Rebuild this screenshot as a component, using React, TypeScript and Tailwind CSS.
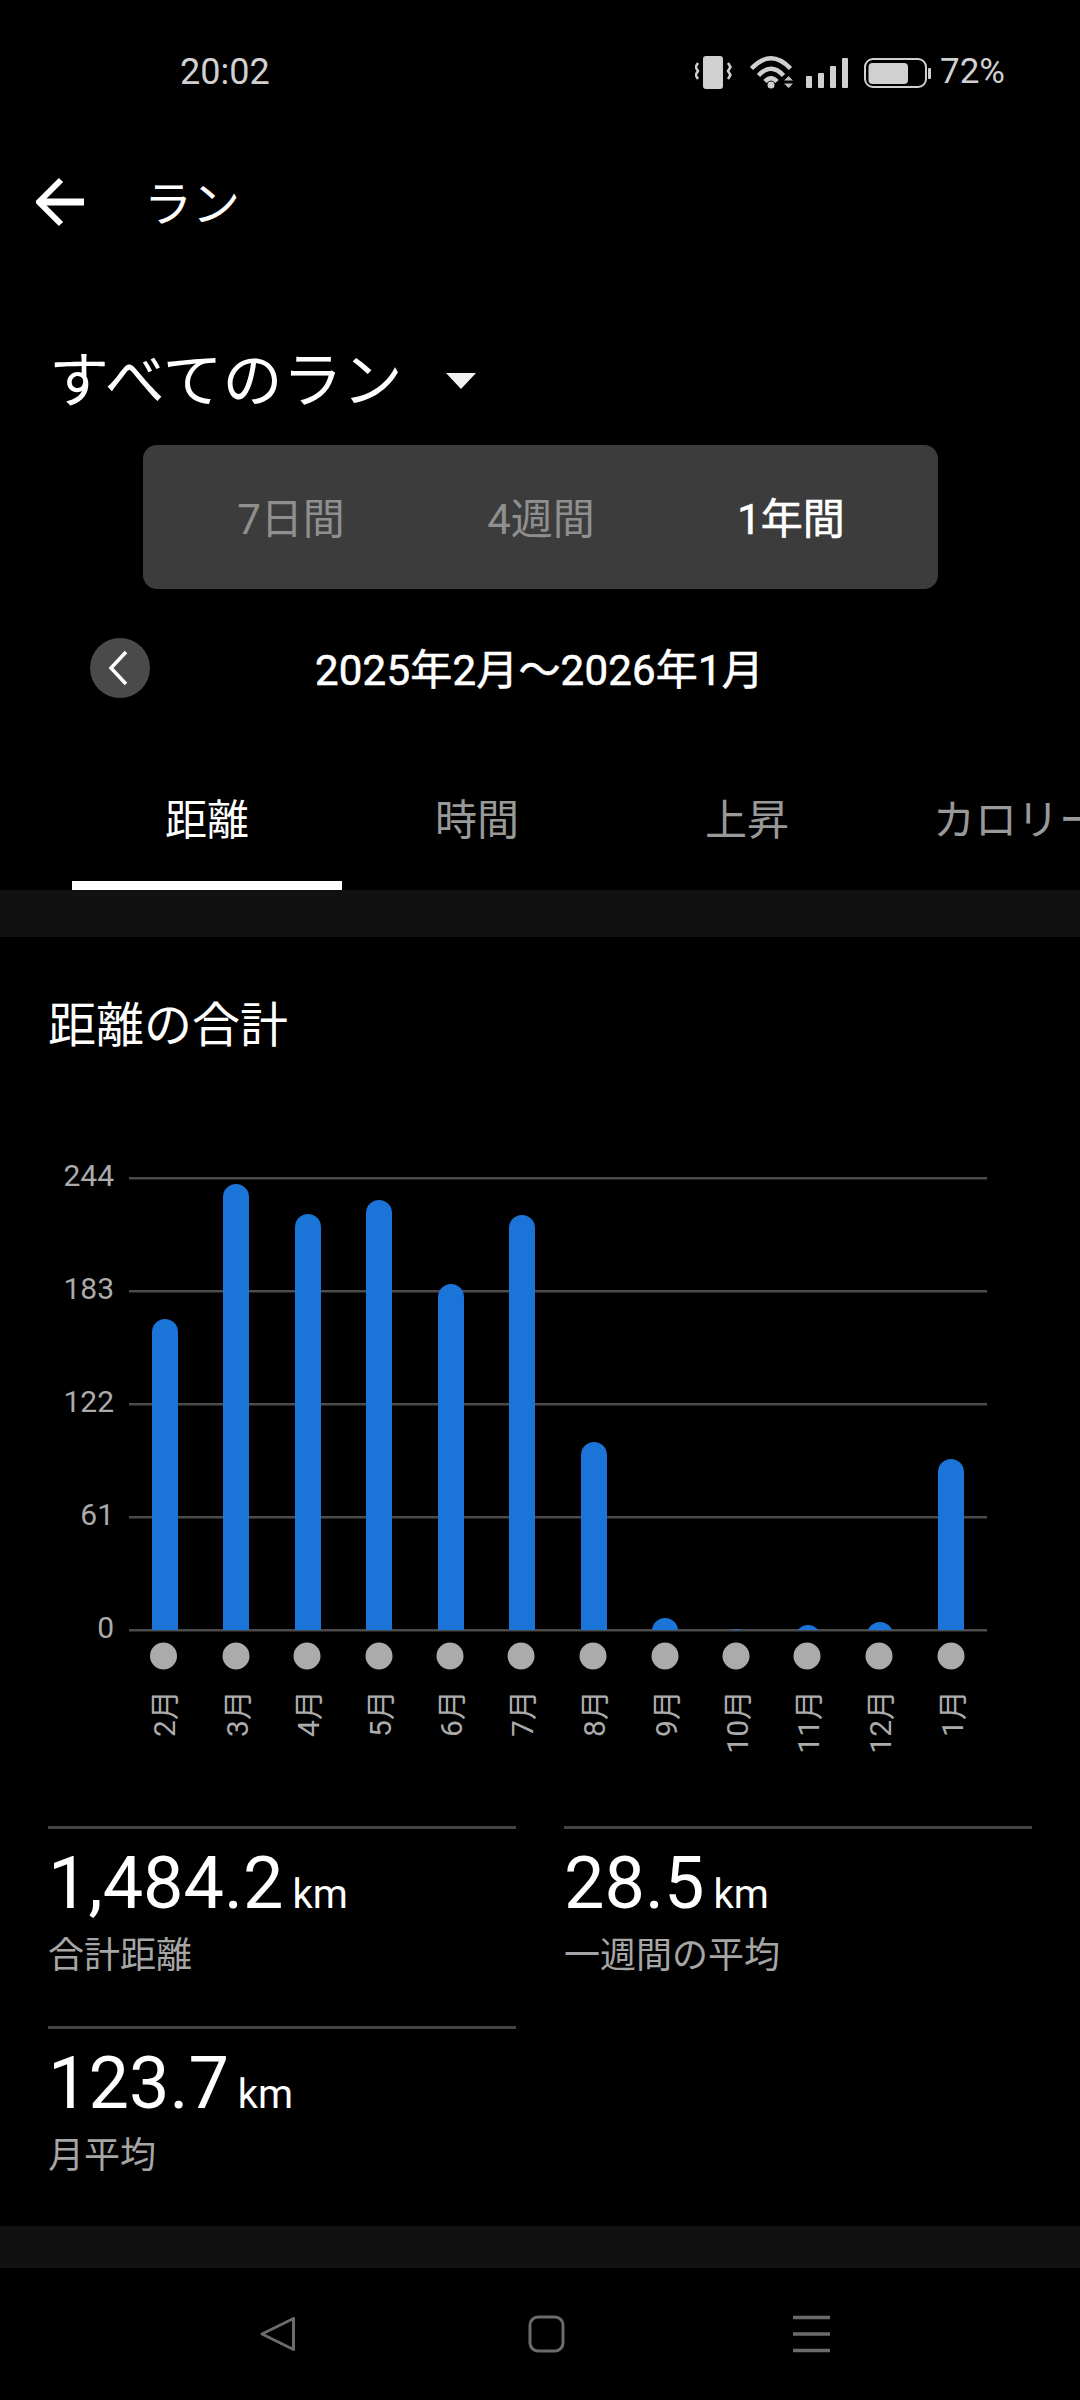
const months = [
  { m: '2月', x: 152, top: 1319, dot: 163.5 },
  { m: '3月', x: 223, top: 1184, dot: 236 },
  { m: '4月', x: 295, top: 1214, dot: 307 },
  { m: '5月', x: 366, top: 1200, dot: 379 },
  { m: '6月', x: 438, top: 1284, dot: 450 },
  { m: '7月', x: 509, top: 1215, dot: 521 },
  { m: '8月', x: 581, top: 1442, dot: 593 },
  { m: '9月', x: 652, top: 1618, dot: 665 },
  { m: '10月', x: 724, top: 1629, dot: 736 },
  { m: '11月', x: 795, top: 1625, dot: 807 },
  { m: '12月', x: 867, top: 1622, dot: 879 },
  { m: '1月', x: 938, top: 1459, dot: 951 },
];
const grid = [
  { v: '244', y: 1178 },
  { v: '183', y: 1291 },
  { v: '122', y: 1404 },
  { v: '61', y: 1517 },
  { v: '0', y: 1630 },
];

function StatusIcons() {
  return (
    <svg width="238" height="38" viewBox="695 52 238 38" className="block">
      <rect x="703" y="55" width="20" height="33" rx="3" fill="#d0d0d0" />
      <path d="M698 62l-2.500 4 2.500 4-2.500 4 2.500 4M728 62l2.500 4-2.500 4 2.500 4-2.500 4" stroke="#d0d0d0" strokeWidth="2.500" fill="none" />
      <path d="M751.500 67.500Q771 47 790.500 67.500M758.500 74.500Q771 61 783.500 74.500M765 80.500Q771 74 777 80.500" stroke="#d0d0d0" strokeWidth="4.500" fill="none" />
      <circle cx="771" cy="84" r="3.500" fill="#d0d0d0" />
      <path d="M784 79.500L788.500 75 793 79.500ZM784 82.500L788.500 87 793 82.500Z" fill="#c0c0c0" />
      <rect x="806" y="75" width="6" height="12" rx="1" fill="#d0d0d0" />
      <rect x="818" y="72" width="6" height="15" rx="1" fill="#d0d0d0" />
      <rect x="830" y="65" width="6" height="22" rx="1" fill="#d0d0d0" />
      <rect x="842" y="57" width="6" height="30" rx="1" fill="#d0d0d0" />
      <rect x="865" y="58" width="61" height="28" rx="8" stroke="#d0d0d0" strokeWidth="2" fill="none" />
      <rect x="868.500" y="62" width="39.500" height="21" rx="4" fill="#d0d0d0" />
      <rect x="928" y="67" width="3" height="11" rx="1" fill="#d0d0d0" />
    </svg>
  );
}

function Chart() {
  return (
    <svg width="1080" height="630" viewBox="0 1150 1080 630" className="block">
      <defs>
        <clipPath id="plot">
          <rect x="0" y="1150" width="1080" height="480" />
        </clipPath>
      </defs>
      {grid.map((g) => (
        <g key={g.v}>
          <rect x="129" y={g.y - 1} width="858" height="2.500" fill="#4b4b4b" />
          <text x="114" y={g.y + 8} textAnchor="end" fontSize="30" fill="#ababab">{g.v}</text>
        </g>
      ))}
      {months.map((b) => (
        <g key={b.m}>
          <rect x={b.x} y={b.top} width="26" height={1660 - b.top} rx="13" fill="#1b74d8" clipPath="url(#plot)" />
          <circle cx={b.dot} cy="1656" r="13.500" fill="#ababab" />
          <text transform={`translate(${b.dot + 11.500},1690) rotate(-90)`} textAnchor="end" fontSize="30" fill="#ababab">{b.m}</text>
        </g>
      ))}
    </svg>
  );
}

function Stat({ value, label }: { value: string; label: string }) {
  return (
    <div className="h-[200px] border-t-[3px] border-[#444444]">
      <div className="mt-[13px] flex items-baseline h-[84px] leading-[84px] text-white">
        <span className="text-[72px]">{value}</span>
        <span className="ml-[9px] text-[40px]">km</span>
      </div>
      <div className="mt-[6px] text-[36px] leading-[48px] text-[#a6a6a6]">{label}</div>
    </div>
  );
}

export default function App() {
  return (
    <div className="w-[1080px] h-[2400px] overflow-hidden bg-black text-white font-[Roboto,'Noto_Sans_CJK_JP',sans-serif]">
      <div className="h-[144px] flex items-center justify-between pl-[180px] pr-[75px] text-[#d0d0d0]">
        <span className="text-[36px]">20:02</span>
        <div className="flex items-center gap-[7px]">
          <StatusIcons />
          <span className="text-[35px]">72%</span>
        </div>
      </div>

      <div className="h-[116px] flex items-center pl-[36px]">
        <svg width="50" height="50" viewBox="36 177 50 50" className="block">
          <path d="M61 180L39 202 61 224" stroke="#ffffff" strokeWidth="6" fill="none" />
          <path d="M40 202H84" stroke="#ffffff" strokeWidth="7" fill="none" />
        </svg>
        <span className="ml-[58px] mt-[5px] text-[48px] leading-[60px]">ラン</span>
      </div>

      <div className="mt-[70px] h-[102px] flex items-center pl-[49px]">
        <span className="mt-[2px] text-[60px] leading-[70px]">すべてのラン</span>
        <svg width="30" height="16" viewBox="0 0 30 16" className="ml-[44px] block">
          <path d="M0 0H30L15 16Z" fill="#f2f2f2" />
        </svg>
      </div>

      <div className="mt-[13px] ml-[143px] w-[795px] h-[144px] rounded-[14px] bg-[#3c3c3c] pl-[23px] pt-[5px] grid grid-cols-[250px_250px_250px] items-center text-[42px] text-center">
        <span className="text-[#8f8f8f]">7日間</span>
        <span className="text-[#8f8f8f]">4週間</span>
        <span className="text-white [-webkit-text-stroke:0.6px_#ffffff]">1年間</span>
      </div>

      <div className="mt-[49px] h-[60px] flex items-center pl-[90px]">
        <div className="w-[60px] h-[60px] rounded-full bg-[#4a4a4a] flex items-center justify-center">
          <svg width="26" height="38" viewBox="0 0 26 38" className="block -ml-[4px]">
            <path d="M21 3L6 19 21 35" stroke="#ffffff" strokeWidth="3.500" fill="none" />
          </svg>
        </div>
        <span className="ml-[165px] mt-[5px] text-[42px] leading-[60px] tracking-[0.2px] [-webkit-text-stroke:0.6px_#ffffff]">2025年2月～2026年1月</span>
      </div>

      <div className="mt-[62px] h-[130px] pl-[72px] flex overflow-hidden text-[42px] text-[#999999] whitespace-nowrap">
        <div className="w-[270px] shrink-0 h-full flex items-center justify-center border-b-[9px] border-white text-white">距離</div>
        <div className="w-[270px] shrink-0 h-full flex items-center justify-center border-b-[9px] border-transparent">時間</div>
        <div className="w-[270px] shrink-0 h-full flex items-center justify-center border-b-[9px] border-transparent">上昇</div>
        <div className="w-[270px] shrink-0 h-full flex items-center justify-center border-b-[9px] border-transparent">カロリー</div>
      </div>

      <div className="h-[47px] bg-[#111111]" />

      <div className="h-[178px] flex items-center pl-[48px] text-[48px]">距離の合計</div>
      <div className="mt-[35px]">
        <Chart />
      </div>

      <div className="mt-[46px] px-[48px] grid grid-cols-2 gap-x-[48px]">
        <Stat value="1,484.2" label="合計距離" />
        <Stat value="28.5" label="一週間の平均" />
        <Stat value="123.7" label="月平均" />
      </div>

      <div className="h-[42px] bg-[#111111]" />

      <div className="h-[132px] flex items-center">
        <svg width="1080" height="132" viewBox="0 2268 1080 132" className="block">
          <path d="M293.500 2318.500V2349.500L262 2334Z" stroke="#6b6b6b" strokeWidth="3" strokeLinejoin="round" fill="none" />
          <rect x="530" y="2317" width="33" height="34" rx="8" stroke="#6b6b6b" strokeWidth="3" fill="none" />
          <path d="M793 2317.500H830M793 2334H830M793 2350.500H830" stroke="#6b6b6b" strokeWidth="3.500" fill="none" />
        </svg>
      </div>
    </div>
  );
}
